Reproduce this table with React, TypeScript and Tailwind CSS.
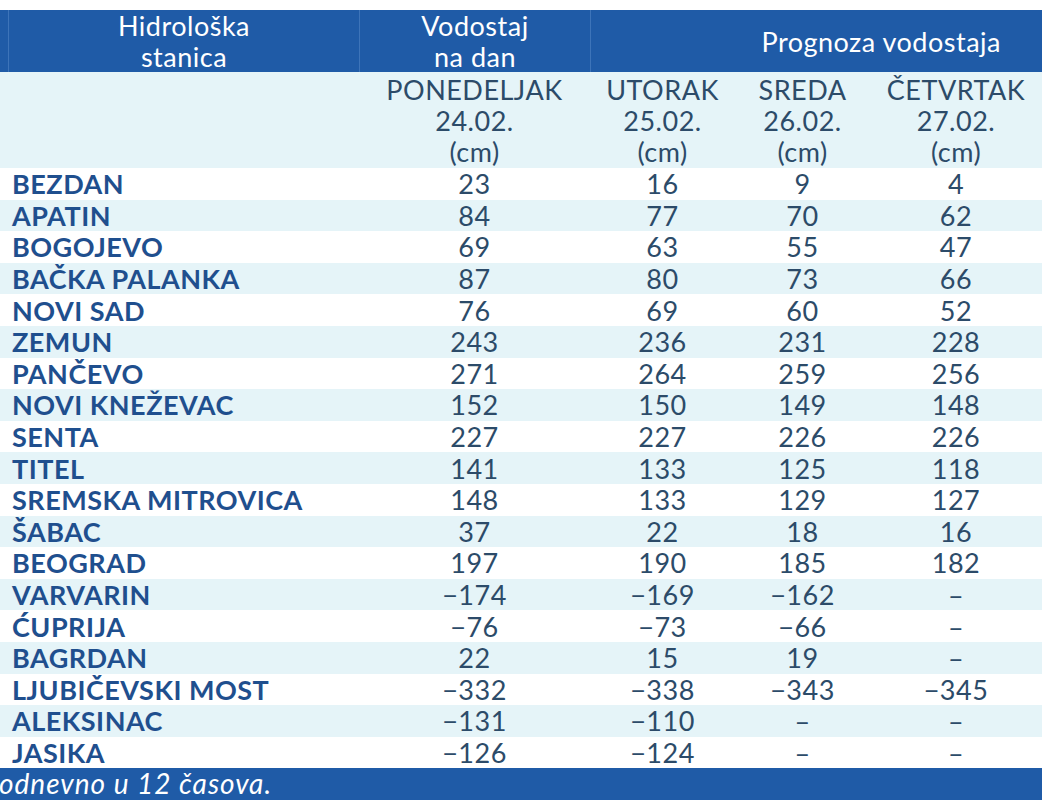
const days = [
  { name: 'PONEDELJAK', date: '24.02.' },
  { name: 'UTORAK', date: '25.02.' },
  { name: 'SREDA', date: '26.02.' },
  { name: 'ČETVRTAK', date: '27.02.' },
];

const rows: [string, string, string, string, string][] = [
  ['BEZDAN', '23', '16', '9', '4'],
  ['APATIN', '84', '77', '70', '62'],
  ['BOGOJEVO', '69', '63', '55', '47'],
  ['BAČKA PALANKA', '87', '80', '73', '66'],
  ['NOVI SAD', '76', '69', '60', '52'],
  ['ZEMUN', '243', '236', '231', '228'],
  ['PANČEVO', '271', '264', '259', '256'],
  ['NOVI KNEŽEVAC', '152', '150', '149', '148'],
  ['SENTA', '227', '227', '226', '226'],
  ['TITEL', '141', '133', '125', '118'],
  ['SREMSKA MITROVICA', '148', '133', '129', '127'],
  ['ŠABAC', '37', '22', '18', '16'],
  ['BEOGRAD', '197', '190', '185', '182'],
  ['VARVARIN', '−174', '−169', '−162', '–'],
  ['ĆUPRIJA', '−76', '−73', '−66', '–'],
  ['BAGRDAN', '22', '15', '19', '–'],
  ['LJUBIČEVSKI MOST', '−332', '−338', '−343', '−345'],
  ['ALEKSINAC', '−131', '−110', '–', '–'],
  ['JASIKA', '−126', '−124', '–', '–'],
];

const cols = 'grid grid-cols-[359px_231px_145px_135px_172px]';

export default function App() {
  return (
    <div className="w-[1042px] h-[800px] overflow-hidden bg-white pt-[10px] font-['Lato','Open_Sans',sans-serif] text-[27px] tracking-[0.5px]">
      {/* top blue header */}
      <div className="grid grid-cols-[8px_351px_231px_452px] h-[62px] bg-[#1f5ba7] text-white leading-[31px]">
        <div />
        <div className="border-l border-[#3d74b9] text-center">
          Hidrološka
          <br />
          stanica
        </div>
        <div className="border-l border-[#3d74b9] text-center">
          Vodostaj
          <br />
          na dan
        </div>
        <div className="border-l border-[#3d74b9] flex items-center justify-end pr-[41px] pt-[1px]">
          Prognoza vodostaja
        </div>
      </div>

      {/* day header */}
      <div className={`${cols} h-[96px] bg-[#e5f4f8] text-[#2c4b69] leading-[31px] pt-[2px]`}>
        <div />
        {days.map((d) => (
          <div key={d.name} className="text-center">
            {d.name}
            <br />
            {d.date}
            <br />
            (cm)
          </div>
        ))}
      </div>

      {/* data rows */}
      {rows.map((r, i) => (
        <div
          key={r[0]}
          className={`${cols} h-[31.6px] items-center leading-none ${i % 2 === 0 ? 'bg-white' : 'bg-[#e5f4f8]'}`}
        >
          <div className="pl-[12px] font-bold text-[#1f4f8e]">{r[0]}</div>
          {r.slice(1).map((v, j) => (
            <div key={j} className="text-center text-[#2c4b69]">
              {v}
            </div>
          ))}
        </div>
      ))}

      {/* footer */}
      <div className="h-[40px] bg-[#1f5ba7] text-white italic text-[28px] tracking-[1px] leading-[30px]">
        <span className="-ml-[1px]">odnevno u 12 časova.</span>
      </div>
    </div>
  );
}
